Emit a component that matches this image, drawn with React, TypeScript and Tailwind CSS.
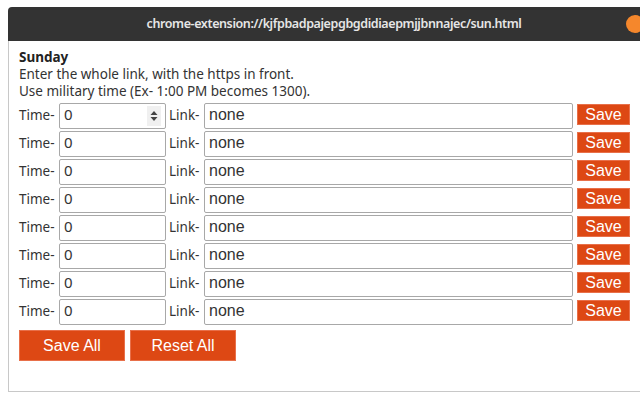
import React from "react";

const ROWS = [0, 1, 2, 3, 4, 5, 6, 7];

const bodyFont = { fontFamily: '"Noto Sans", "Open Sans", sans-serif' };
const arial = { fontFamily: '"Liberation Sans", Arial, sans-serif' };

function Spinner() {
  return (
    <div className="flex h-[20px] w-[16px] items-center justify-center bg-[#f0f0f0]">
      <svg width="8" height="12" viewBox="0 0 8 12">
        <path d="M4 1 L7.5 5 L0.5 5 Z" fill="#444" />
        <path d="M4 11 L7.5 7 L0.5 7 Z" fill="#444" />
      </svg>
    </div>
  );
}

function Row({ first }: { first: boolean }) {
  return (
    <div className="flex h-[28px] items-start">
      <div className="flex h-[26px] items-center">
        <span className="w-[40px] text-[13.5px] leading-none text-[#333]">Time-</span>
      </div>
      <div className="flex h-[26px] w-[107px] items-center rounded-[2px] border border-[#a8a8a8] bg-white pl-[4px] pr-[4px]">
        <input
          readOnly
          value="0"
          className="mb-[5px] w-full bg-transparent text-[15px] leading-[18px] text-[#333] outline-none"
          style={bodyFont}
        />
        {first && <Spinner />}
      </div>
      <div className="ml-[3px] flex h-[26px] items-center">
        <span className="w-[35px] text-[13.5px] leading-none text-[#333]">Link-</span>
      </div>
      <div className="flex h-[26px] w-[369px] items-center rounded-[2px] border border-[#a8a8a8] bg-white pl-[4px]">
        <input
          readOnly
          value="none"
          className="mb-[2px] w-full bg-transparent text-[16px] leading-[18px] text-[#333] outline-none"
          style={arial}
        />
      </div>
      <button
        className="mt-[1px] ml-[4px] h-[21px] w-[53px] border border-[#e8704a] bg-[#dd4814] text-[16px] leading-none text-white"
        style={arial}
      >
        Save
      </button>
    </div>
  );
}

export default function App() {
  return (
    <div className="relative h-[400px] w-[640px] overflow-hidden bg-white" style={bodyFont}>
      <div className="ml-[8px] pt-[7px] w-[652px]">
        <div className="flex h-[34px] items-center justify-center rounded-t-[4px] bg-[#333333]">
          <span
            className="text-[12.5px] font-semibold tracking-[-0.4px] text-[#e6e6e6]"
            style={{ fontFamily: '"Noto Sans", sans-serif' }}
          >
            chrome-extension://kjfpbadpajepgbgdidiaepmjjbnnajec/sun.html
          </span>
        </div>
        <div className="h-[351px] border-x border-b border-[#c8c8c8] px-[10px] pt-[8px] text-[#222]">
          <div className="text-[13.5px] font-bold leading-[17px]">Sunday</div>
          <div className="text-[13.5px] leading-[17px] text-[#333]">Enter the whole link, with the https in front.</div>
          <div className="text-[13.5px] leading-[17px] text-[#333]">Use military time (Ex- 1:00 PM becomes 1300).</div>
          <div className="mt-[3px] flex flex-col">
            {ROWS.map((r) => (
              <Row key={r} first={r === 0} />
            ))}
          </div>
          <div className="mt-[3px] flex gap-[5px]">
            <button
              className="h-[31px] w-[106px] border border-[#e8704a] bg-[#dd4814] text-[16px] text-white"
              style={arial}
            >
              Save All
            </button>
            <button
              className="h-[31px] w-[106px] border border-[#e8704a] bg-[#dd4814] text-[16px] text-white"
              style={arial}
            >
              Reset All
            </button>
          </div>
        </div>
      </div>
      <div className="absolute left-[626px] top-[15px] h-[18px] w-[18px] rounded-full bg-[#f5872c]" />
    </div>
  );
}
